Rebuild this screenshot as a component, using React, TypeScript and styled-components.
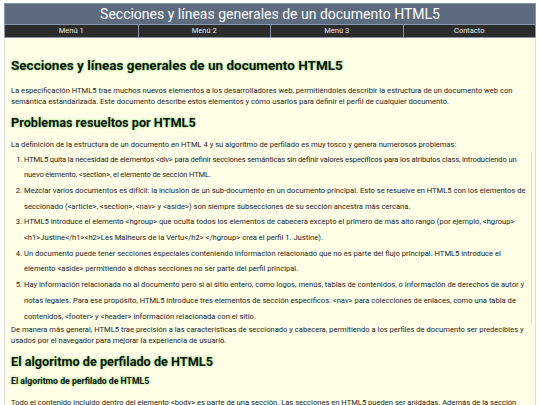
import styled, { createGlobalStyle } from 'styled-components';

const GlobalStyle = createGlobalStyle`
  html, body {
    margin: 0;
    padding: 0;
    background: #ffffff;
  }
  body {
    font-family: Roboto, "Liberation Sans", Arial, sans-serif;
    color: #222;
  }
`;

const Page = styled.div`
  padding: 3px 4px 0;
`;

const Header = styled.header`
  background: #5c6b7e;
  border: 1px solid #8a97a8;
  color: #fff;
  text-align: center;
  font-size: 14px;
  line-height: 20px;
  height: 20px;
`;

const Nav = styled.nav`
  display: grid;
  grid-template-columns: repeat(4, 1fr);
  background: #2c2c2c;
  border: 1px solid #8f96a3;
  border-top: none;
`;

const NavItem = styled.a`
  color: #e8e8e8;
  font-size: 7.5px;
  line-height: 12px;
  text-align: center;
  border-left: 1px solid #8f96a3;

  &:first-child {
    border-left: none;
  }
`;

const Main = styled.main`
  margin-top: 1px;
  background: #ffffe8;
  border-left: 1px solid #dcdcdc;
  border-right: 1px solid #dcdcdc;
  padding: 6px 3px 0 6px;
`;

const Title = styled.h1`
  font-size: 13.5px;
  line-height: 16px;
  font-weight: 700;
  color: #111;
  text-shadow: 0 0 3px #72d860;
  margin: 12px 0 12px;
`;

const Heading = styled.h2<{ $minor?: boolean; $first?: boolean }>`
  font-size: ${p => (p.$minor ? '8.7px' : '12.7px')};
  line-height: ${p => (p.$minor ? '10px' : '15px')};
  font-weight: 700;
  color: #111;
  text-shadow: 0 0 3px #72d860;
  margin: ${p => (p.$minor ? '6.3px 0 11.7px' : p.$first ? '8px 0 9px' : '8px 0 0')};
`;

const Para = styled.p`
  font-size: 7.6px;
  line-height: 11px;
  margin: 0;
`;

const List = styled.ol`
  font-size: 7.6px;
  line-height: 15.7px;
  margin: 1.5px 0 0 0;
  padding: 0 3px 0 13px;
  border-right: 1px solid #dedede;
`;

const Item = styled.li<{ $snug?: boolean }>`
  letter-spacing: ${p => (p.$snug ? '-0.15px' : 'normal')};
`;

const items = [
  'HTML5 quita la necesidad de elementos <div> para definir secciones semánticas sin definir valores específicos para los atributos class, introduciendo un nuevo elemento, <section>, el elemento de sección HTML.',
  'Mezclar varios documentos es difícil: la inclusión de un sub-documento en un documento principal. Esto se resuelve en HTML5 con los elementos de seccionado (<article>, <section>, <nav> y <aside>) son siempre subsecciones de su sección ancestra más cercana.',
  'HTML5 introduce el elemento <hgroup> que oculta todos los elementos de cabecera excepto el primero de más alto rango (por ejemplo, <hgroup> <h1>Justine</h1><h2>Les Malheurs de la Vertu</h2> </hgroup> crea el perfil 1. Justine).',
  'Un documento puede tener secciones especiales conteniendo información relacionado que no es parte del flujo principal. HTML5 introduce el elemento <aside> permitiendo a dichas secciones no ser parte del perfil principal.',
  'Hay información relacionada no al documento pero si al sitio entero, como logos, menús, tablas de contenidos, o información de derechos de autor y notas legales. Para ese propósito, HTML5 introduce tres elementos de sección específicos: <nav> para colecciones de enlaces, como una tabla de contenidos, <footer> y <header> información relacionada con el sitio.',
];

export default function App() {
  return (
    <Page>
      <GlobalStyle />
      <Header>Secciones y líneas generales de un documento HTML5</Header>
      <Nav>
        <NavItem>Menú 1</NavItem>
        <NavItem>Menú 2</NavItem>
        <NavItem>Menú 3</NavItem>
        <NavItem>Contacto</NavItem>
      </Nav>
      <Main>
        <Title>Secciones y líneas generales de un documento HTML5</Title>
        <Para>
          La especificación HTML5 trae muchos nuevos elementos a los desarrolladores web, permitiéndoles
          describir la estructura de un documento web con semántica estandarizada. Este documento describe
          estos elementos y cómo usarlos para definir el perfil de cualquier documento.
        </Para>
        <Heading $first>Problemas resueltos por HTML5</Heading>
        <Para>
          La definición de la estructura de un documento en HTML 4 y su algoritmo de perfilado es muy tosco y
          genera numerosos problemas:
        </Para>
        <List>
          {items.map((text, i) => (
            <Item key={text} $snug={i === 0}>
              {text}
            </Item>
          ))}
        </List>
        <Para>
          De manera más general, HTML5 trae precisión a las características de seccionado y cabecera,
          permitiendo a los perfiles de documento ser predecibles y usados por el navegador para mejorar la
          experiencia de usuario.
        </Para>
        <Heading>El algoritmo de perfilado de HTML5</Heading>
        <Heading as="h3" $minor>
          El algoritmo de perfilado de HTML5
        </Heading>
        <Para>
          Todo el contenido incluido dentro del elemento &lt;body&gt; es parte de una sección. Las secciones en
          HTML5 pueden ser anidadas. Además de la sección principal, definida por el elemento &lt;body&gt;, los
          límites de la sección se definen explícita o implícitamente.
        </Para>
      </Main>
    </Page>
  );
}
